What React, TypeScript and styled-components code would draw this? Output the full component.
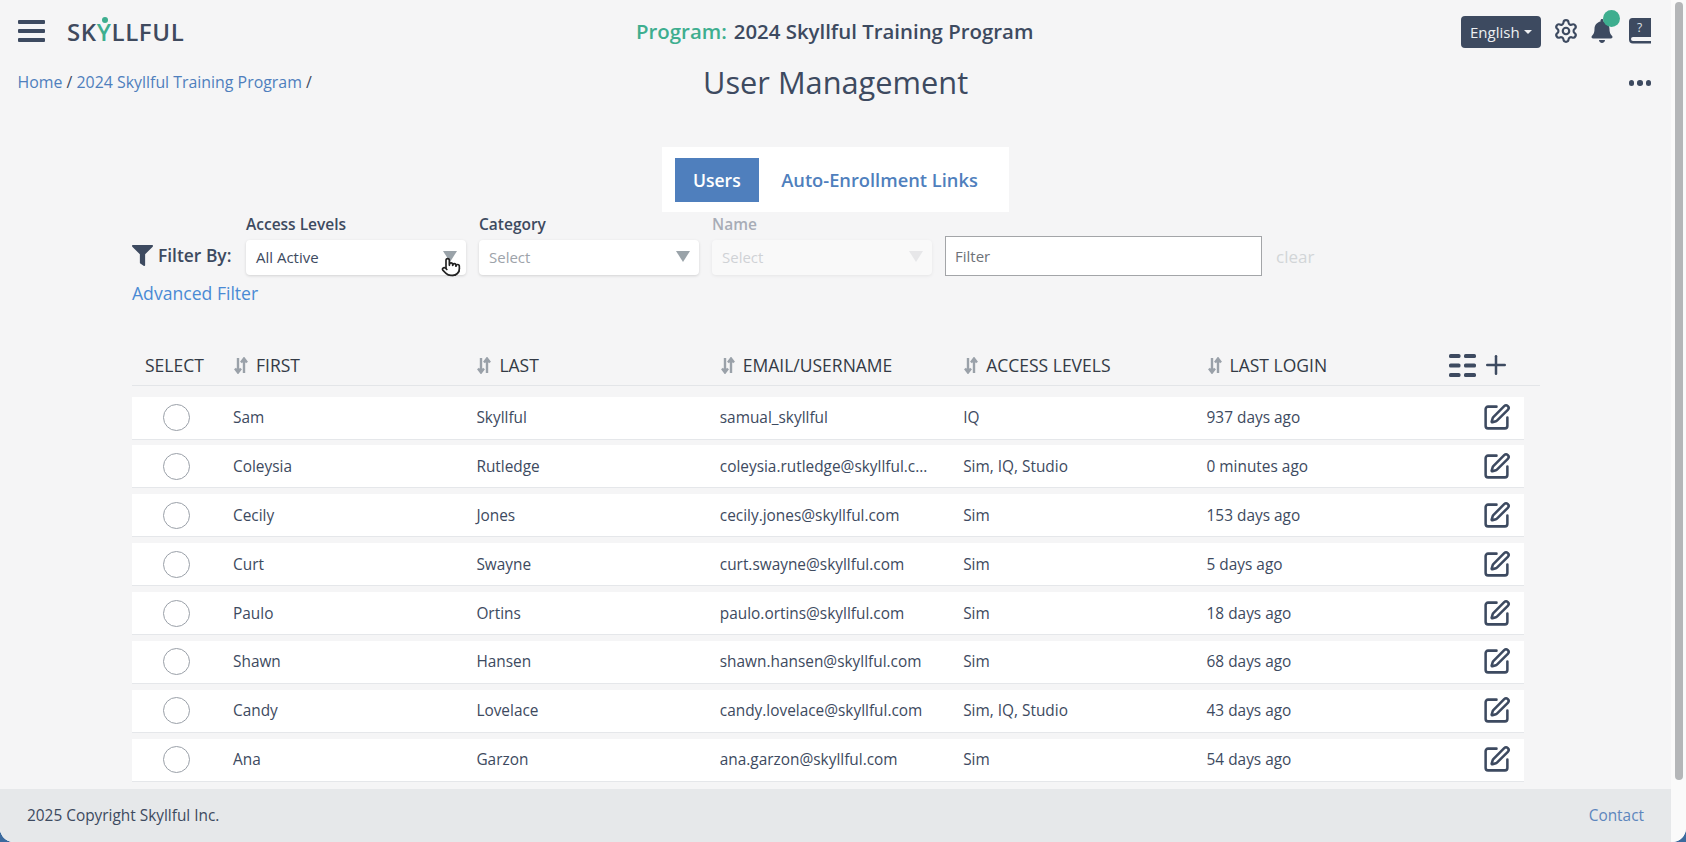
import React from "react";
import styled, { createGlobalStyle } from "styled-components";
import { Plus, Settings, SquarePen, Pointer } from "lucide-react";
import { FaBell, FaFilter } from "react-icons/fa";

const users = [
  { first: "Sam", last: "Skyllful", email: "samual_skyllful", access: "IQ", login: "937 days ago" },
  { first: "Coleysia", last: "Rutledge", email: "coleysia.rutledge@skyllful.c...", access: "Sim, IQ, Studio", login: "0 minutes ago" },
  { first: "Cecily", last: "Jones", email: "cecily.jones@skyllful.com", access: "Sim", login: "153 days ago" },
  { first: "Curt", last: "Swayne", email: "curt.swayne@skyllful.com", access: "Sim", login: "5 days ago" },
  { first: "Paulo", last: "Ortins", email: "paulo.ortins@skyllful.com", access: "Sim", login: "18 days ago" },
  { first: "Shawn", last: "Hansen", email: "shawn.hansen@skyllful.com", access: "Sim", login: "68 days ago" },
  { first: "Candy", last: "Lovelace", email: "candy.lovelace@skyllful.com", access: "Sim, IQ, Studio", login: "43 days ago" },
  { first: "Ana", last: "Garzon", email: "ana.garzon@skyllful.com", access: "Sim", login: "54 days ago" },
];

const columns = ["FIRST", "LAST", "EMAIL/USERNAME", "ACCESS LEVELS", "LAST LOGIN"];

const SortIcon = () => (
  <svg width="14" height="17" viewBox="0 0 14 17" fill="none" stroke="#9aa1a9" strokeWidth="2.4">
    <path d="M4 1v14M1 11.5l3 4 3-4" />
    <path d="M10 16V2M7 5.5l3-4 3 4" />
  </svg>
);

const ColumnsIcon = () => (
  <svg width="27" height="23" viewBox="0 0 27 23" fill="#3d4a60">
    <rect x="0" y="0" width="11.5" height="4" rx="1.6" />
    <rect x="15" y="0" width="12" height="4" rx="1.6" />
    <rect x="0" y="9.5" width="11.5" height="4" rx="1.6" />
    <rect x="15" y="9.5" width="12" height="4" rx="1.6" />
    <rect x="0" y="19" width="11.5" height="4" rx="1.6" />
    <rect x="15" y="19" width="12" height="4" rx="1.6" />
  </svg>
);

const BookIcon = () => (
  <svg width="22" height="26" viewBox="0 0 22 26">
    <path d="M3.5 0H22v19H4a2 2 0 0 0 0 4h18v2.5H4a4 4 0 0 1-4-4V3.5A3.5 3.5 0 0 1 3.5 0z" fill="#3d4a60" />
  </svg>
);

const Caret = styled.span<{ $faded?: boolean }>`
  width: 0;
  height: 0;
  border-left: 7.5px solid transparent;
  border-right: 7.5px solid transparent;
  border-top: 11px solid ${(p) => (p.$faded ? "#d4d6d8" : "#9aa3a9")};
`;

const App = () => (
  <>
    <GlobalStyle />
    <Frame>
      <Main>
        <TopBar>
          <Burger>
            <span />
            <span />
            <span />
          </Burger>
          <Logo>
            SK<LogoY>Y<LogoDot /></LogoY>LLFUL
          </Logo>
          <ProgramTitle>
            <ProgramLabel>Program:</ProgramLabel>
            <ProgramName>2024 Skyllful Training Program</ProgramName>
          </ProgramTitle>
          <TopActions>
            <LanguageButton>
              English
              <SmallCaret />
            </LanguageButton>
            <Settings size={26} strokeWidth={2} color="#3d4a60" />
            <BellWrap>
              <FaBell size={24} color="#3d4a60" />
              <BellBadge />
            </BellWrap>
            <BookWrap>
              <BookIcon />
              <BookMark>?</BookMark>
            </BookWrap>
          </TopActions>
        </TopBar>

        <TitleRow>
          <Breadcrumb>
            <a>Home</a> / <a>2024 Skyllful Training Program</a> /
          </Breadcrumb>
          <PageTitle>User Management</PageTitle>
          <MoreDots>
            <i />
            <i />
            <i />
          </MoreDots>
        </TitleRow>

        <TabsWrap>
          <Tabs>
            <Tab $active>Users</Tab>
            <Tab>Auto-Enrollment Links</Tab>
          </Tabs>
        </TabsWrap>

        <Content>
          <FilterRow>
            <FilterBy>
              <FaFilter size={21} color="#3d4a60" />
              Filter By:
            </FilterBy>
            <Field>
              <FieldLabel>Access Levels</FieldLabel>
              <Select>
                <SelectValue>All Active</SelectValue>
                <Caret />
                <Cursor>
                  <Pointer size={20} strokeWidth={2} color="#222" fill="#fff" />
                </Cursor>
              </Select>
            </Field>
            <Field>
              <FieldLabel>Category</FieldLabel>
              <Select>
                <SelectValue $placeholder>Select</SelectValue>
                <Caret />
              </Select>
            </Field>
            <Field $disabled>
              <FieldLabel>Name</FieldLabel>
              <Select>
                <SelectValue $placeholder>Select</SelectValue>
                <Caret $faded />
              </Select>
            </Field>
            <FilterInput placeholder="Filter" />
            <ClearLink>clear</ClearLink>
          </FilterRow>
          <AdvancedFilter>Advanced Filter</AdvancedFilter>

          <HeaderRow>
            <SelectHead>SELECT</SelectHead>
            {columns.map((c) => (
              <HeadCell key={c}>
                <SortIcon />
                {c}
              </HeadCell>
            ))}
            <HeadActions>
              <ColumnsIcon />
              <Plus size={30} strokeWidth={2} color="#3d4a60" />
            </HeadActions>
          </HeaderRow>

          <Rows>
            {users.map((u) => (
              <Row key={u.first}>
                <RadioCell>
                  <Radio />
                </RadioCell>
                <Cell>{u.first}</Cell>
                <Cell>{u.last}</Cell>
                <Cell>{u.email}</Cell>
                <Cell>{u.access}</Cell>
                <Cell>{u.login}</Cell>
                <EditCell>
                  <SquarePen size={29} strokeWidth={2.1} color="#3d4a60" />
                </EditCell>
              </Row>
            ))}
          </Rows>
        </Content>

        <Footer>
          <span>2025 Copyright Skyllful Inc.</span>
          <ContactLink>Contact</ContactLink>
        </Footer>
      </Main>
      <ScrollTrack>
        <ScrollThumb />
      </ScrollTrack>
    </Frame>
  </>
);

export default App;

const GlobalStyle = createGlobalStyle`
  html, body {
    margin: 0;
    padding: 0;
    background: #3b6a9e;
  }
  body {
    font-family: "Open Sans", "Liberation Sans", sans-serif;
    color: #3d4a60;
  }
  * {
    box-sizing: border-box;
  }
`;

const Frame = styled.div`
  display: flex;
  width: 1686px;
  height: 842px;
  overflow: hidden;
  background: #fff;
  border-radius: 0 0 14px 14px;
`;

const Main = styled.div`
  display: flex;
  flex-direction: column;
  width: 1671px;
  height: 842px;
  background: #f5f5f6;
`;

const TopBar = styled.header`
  position: relative;
  display: flex;
  align-items: center;
  height: 62px;
  flex-shrink: 0;
  padding: 0 20px 0 18px;
`;

const Burger = styled.div`
  display: flex;
  flex-direction: column;
  justify-content: space-between;
  width: 27px;
  height: 22px;
  margin-right: 22px;

  span {
    height: 4px;
    border-radius: 1px;
    background: #3d4a60;
  }
`;

const Logo = styled.div`
  font-size: 24px;
  font-weight: 600;
  letter-spacing: 0.6px;
  color: #3f4a5e;
`;

const LogoY = styled.span`
  position: relative;
  color: #3eae8f;
`;

const LogoDot = styled.i`
  position: absolute;
  top: 2px;
  left: 5px;
  width: 6px;
  height: 6px;
  border-radius: 50%;
  background: #3eae8f;
`;

const ProgramTitle = styled.div`
  position: absolute;
  top: 18px;
  left: 636px;
  display: flex;
  gap: 7px;
  font-size: 20.4px;
  font-weight: 600;
  line-height: 27px;
`;

const ProgramLabel = styled.span`
  color: #3eae8f;
`;

const ProgramName = styled.span`
  color: #3d4a60;
`;

const TopActions = styled.div`
  display: flex;
  align-items: center;
  margin-left: auto;
`;

const LanguageButton = styled.div`
  display: flex;
  align-items: center;
  gap: 4px;
  width: 80px;
  height: 32px;
  margin-top: 2px;
  margin-right: 12px;
  padding-left: 9px;
  border-radius: 4px;
  background: #3d4a60;
  color: #eef0f2;
  font-size: 15px;
`;

const SmallCaret = styled.span`
  border-left: 4px solid transparent;
  border-right: 4px solid transparent;
  border-top: 4px solid #eef0f2;
`;

const BellWrap = styled.div`
  position: relative;
  display: flex;
  margin-left: 11px;
`;

const BellBadge = styled.i`
  position: absolute;
  top: -9px;
  right: -6px;
  width: 17px;
  height: 17px;
  border-radius: 50%;
  background: #3eae8f;
`;

const BookWrap = styled.div`
  position: relative;
  display: flex;
  margin-left: 15px;
`;

const BookMark = styled.span`
  position: absolute;
  top: 1px;
  left: 8px;
  font-size: 12px;
  color: #dfe3e8;
`;

const TitleRow = styled.div`
  position: relative;
  display: flex;
  align-items: flex-start;
  justify-content: space-between;
  height: 85px;
  flex-shrink: 0;
  padding: 0 20px 0 17.5px;
`;

const Breadcrumb = styled.div`
  padding-top: 10px;
  font-size: 15.9px;
  line-height: 21px;
  color: #3d4a60;

  a {
    color: #4f7fbd;
  }
`;

const PageTitle = styled.h1`
  position: absolute;
  top: -1px;
  left: 703px;
  margin: 0;
  font-size: 30.75px;
  font-weight: 400;
  line-height: 42px;
  color: #3d4a60;
`;

const MoreDots = styled.div`
  display: flex;
  gap: 3px;
  padding-top: 18px;

  i {
    width: 5.5px;
    height: 5.5px;
    border-radius: 50%;
    background: #3d4a60;
  }
`;

const TabsWrap = styled.div`
  display: flex;
  height: 65px;
  flex-shrink: 0;
  padding-left: 662px;
`;

const Tabs = styled.div`
  display: flex;
  align-items: center;
  width: 347px;
  height: 65px;
  padding-left: 13px;
  background: #fff;
`;

const Tab = styled.div<{ $active?: boolean }>`
  display: flex;
  align-items: center;
  height: 44px;
  padding: 0 ${(p) => (p.$active ? "18px" : "22.5px")};
  background: ${(p) => (p.$active ? "#4f7fbd" : "transparent")};
  color: ${(p) => (p.$active ? "#fff" : "#4f7fbd")};
  font-size: ${(p) => (p.$active ? "17.5px" : "18.3px")};
  font-weight: 600;
`;

const Content = styled.div`
  flex: 1;
  min-height: 0;
  overflow: hidden;
  padding: 0 0 0 132px;
`;

const FilterRow = styled.div`
  display: flex;
  align-items: flex-end;
  height: 63px;
`;

const FilterBy = styled.div`
  display: flex;
  align-items: center;
  gap: 5px;
  width: 114px;
  height: 37px;
  padding-bottom: 3px;
  font-size: 17.4px;
  font-weight: 600;
  white-space: nowrap;
`;

const Field = styled.div<{ $disabled?: boolean }>`
  display: flex;
  flex-direction: column;
  width: 220px;
  margin-right: 13px;
  opacity: ${(p) => (p.$disabled ? 0.42 : 1)};
`;

const FieldLabel = styled.label`
  height: 28px;
  padding-top: 2px;
  font-size: 15.5px;
  font-weight: 600;
  line-height: 21px;
`;

const Select = styled.div`
  position: relative;
  display: flex;
  align-items: center;
  justify-content: space-between;
  height: 35px;
  padding: 0 9px 2px 10px;
  border-radius: 4px;
  background: #fff;
  box-shadow: 0 1px 3px rgba(0, 0, 0, 0.14);
`;

const SelectValue = styled.span<{ $placeholder?: boolean }>`
  font-size: 15px;
  color: ${(p) => (p.$placeholder ? "#9da3aa" : "#3d4a60")};
`;

const Cursor = styled.span`
  position: absolute;
  top: 17px;
  right: 5px;
  display: flex;
`;

const FilterInput = styled.input`
  width: 317px;
  height: 40px;
  margin-bottom: -1px;
  padding: 0 9px;
  border: 1px solid #a3a5a8;
  background: #fff;
  font-family: inherit;
  font-size: 15px;
  outline: none;

  &::placeholder {
    color: #6d7278;
    opacity: 1;
  }
`;

const ClearLink = styled.span`
  height: 36px;
  margin-left: 14px;
  font-size: 17px;
  line-height: 36px;
  color: #d2d5d8;
`;

const AdvancedFilter = styled.a`
  display: block;
  margin-top: 7px;
  font-size: 17.6px;
  line-height: 23px;
  color: #4a8ad4;
`;

const HeaderRow = styled.div`
  display: grid;
  grid-template-columns: 101px repeat(5, 243.4px) 1fr;
  align-items: center;
  width: 1408px;
  height: 47px;
  margin-top: 34px;
  padding-top: 6px;
  border-bottom: 1px solid #e3e5e8;
  font-size: 17.5px;
  color: #333a45;
`;

const SelectHead = styled.div`
  padding-left: 13px;
`;

const HeadCell = styled.div`
  display: flex;
  align-items: center;
  gap: 8px;
  padding-left: 1px;
`;

const HeadActions = styled.div`
  display: flex;
  align-items: center;
  gap: 5px;
  margin-left: -1px;
`;

const Rows = styled.div`
  display: flex;
  flex-direction: column;
  gap: 5.9px;
  width: 1392px;
  margin-top: 10.5px;
`;

const Row = styled.div`
  display: grid;
  grid-template-columns: 101px repeat(5, 243.4px) 1fr;
  align-items: center;
  height: 43px;
  background: #fff;
  border-bottom: 1px solid #e5e7ea;
  font-size: 15.4px;
`;

const RadioCell = styled.div`
  display: flex;
  padding-left: 31px;
`;

const Radio = styled.span`
  width: 27px;
  height: 27px;
  border: 1px solid #9aa0a8;
  border-radius: 50%;
  background: #fff;
`;

const Cell = styled.div`
  white-space: nowrap;
`;

const EditCell = styled.div`
  display: flex;
  justify-content: flex-end;
  padding-right: 13px;
`;

const Footer = styled.footer`
  display: flex;
  align-items: center;
  justify-content: space-between;
  height: 53px;
  flex-shrink: 0;
  padding: 0 27px 0 27px;
  background: #e6e8ea;
  font-size: 15.4px;
`;

const ContactLink = styled.a`
  color: #5d86bd;
`;

const ScrollTrack = styled.div`
  flex: 1;
  padding: 2px 3px 0 4px;
  background: #fafafa;
`;

const ScrollThumb = styled.div`
  height: 778px;
  border-radius: 4px;
  background: #b4b6b8;
`;
